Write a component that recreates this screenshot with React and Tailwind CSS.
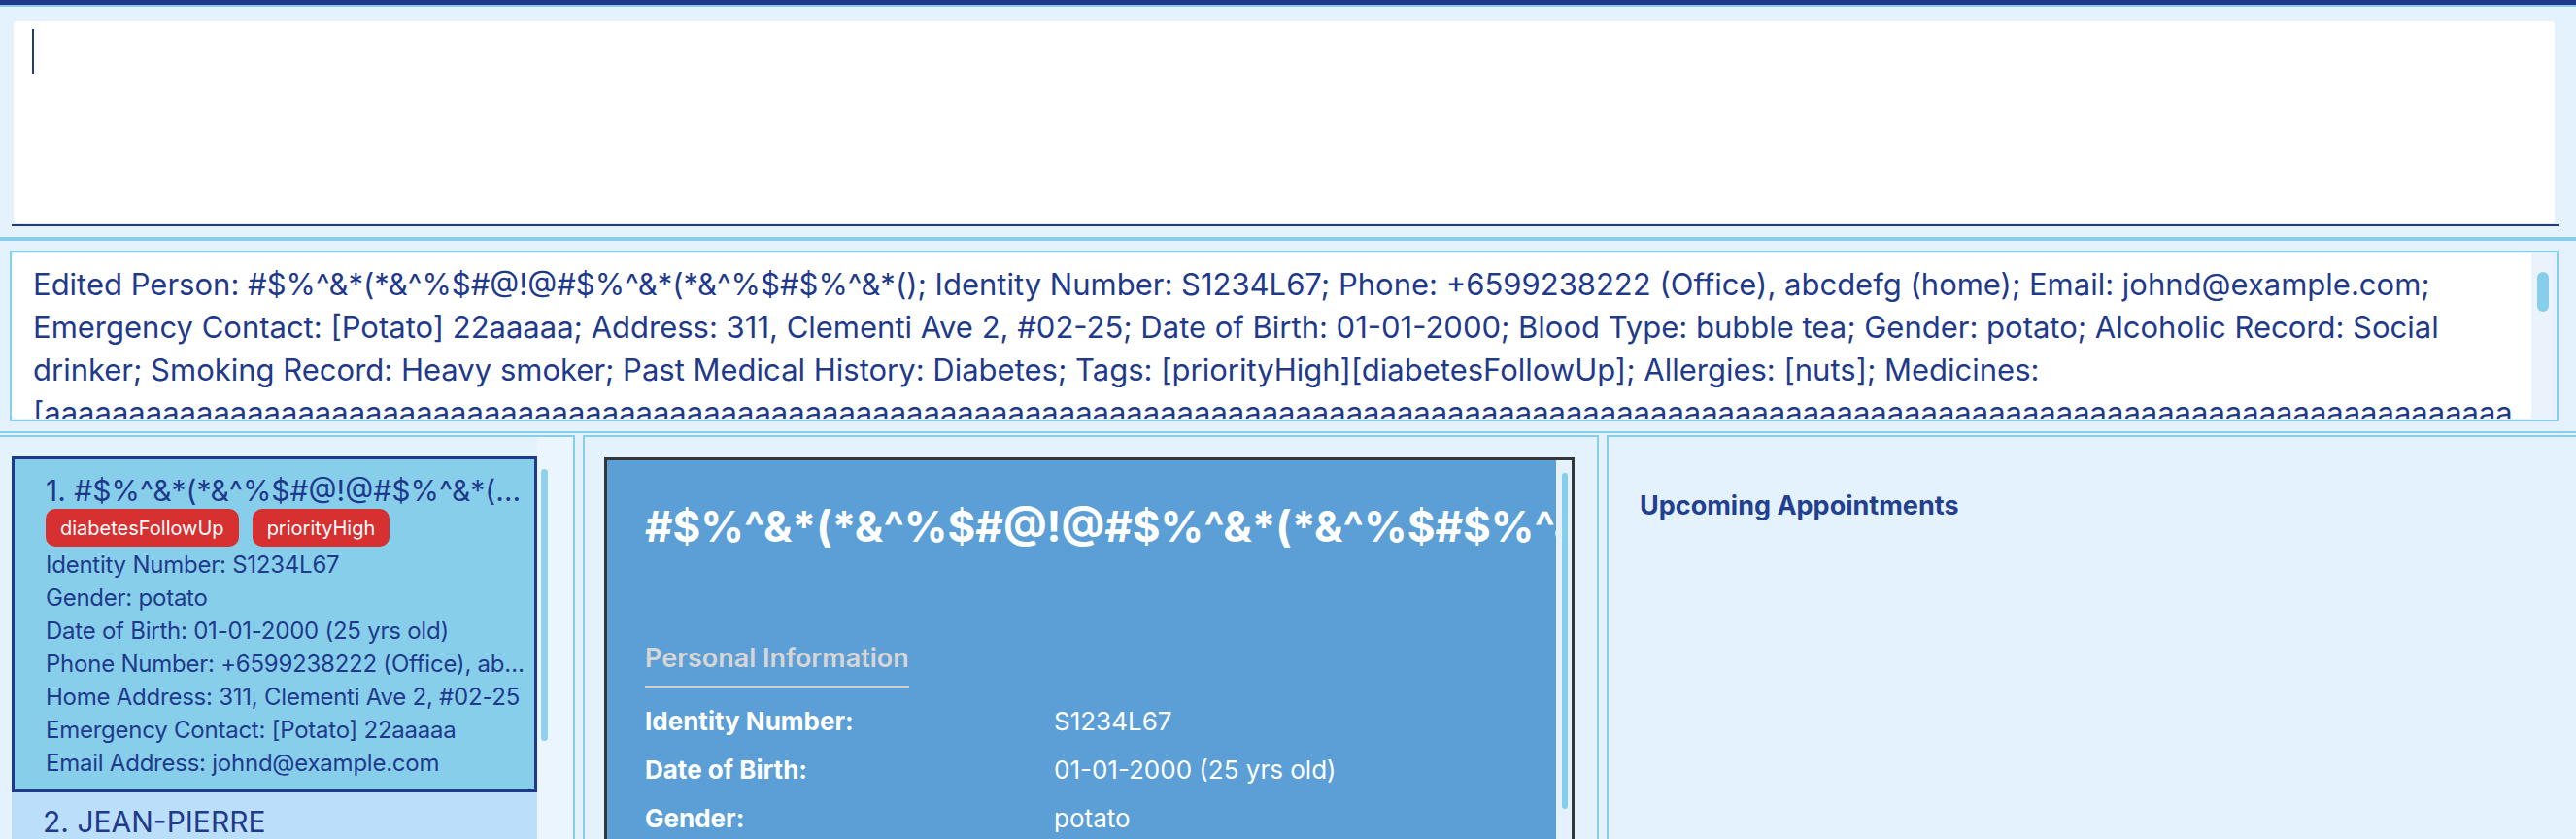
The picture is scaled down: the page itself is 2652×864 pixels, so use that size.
import React from 'react';

const NAME = '#$%^&*(*&^%$#@!@#$%^&*(*&^%$#$%^&*()';
const MEDS = '[' + 'a'.repeat(400) + ']';

const RESULT =
  `Edited Person: ${NAME}; Identity Number: S1234L67; Phone: +6599238222 (Office), abcdefg (home); Email: johnd@example.com; ` +
  'Emergency Contact: [Potato] 22aaaaa; Address: 311, Clementi Ave 2, #02-25; Date of Birth: 01-01-2000; Blood Type: bubble tea; ' +
  'Gender: potato; Alcoholic Record: Social drinker; Smoking Record: Heavy smoker; Past Medical History: Diabetes; ' +
  `Tags: [priorityHigh][diabetesFollowUp]; Allergies: [nuts]; Medicines: ${MEDS}`;

const cardLines = [
  'Identity Number: S1234L67',
  'Gender: potato',
  'Date of Birth: 01-01-2000 (25 yrs old)',
  'Phone Number: +6599238222 (Office), abcdefg (home)',
  'Home Address: 311, Clementi Ave 2, #02-25',
  'Emergency Contact: [Potato] 22aaaaa',
  'Email Address: johnd@example.com',
];

const details = [
  ['Identity Number:', 'S1234L67'],
  ['Date of Birth:', '01-01-2000 (25 yrs old)'],
  ['Gender:', 'potato'],
  ['Phone Number:', '+6599238222 (Office), abcdefg (home)'],
];

const Tag = ({ children }) => (
  <span className="h-[39px] px-[15px] rounded-[10px] bg-[#d63031] text-white text-[20px] flex items-center">
    {children}
  </span>
);

const PersonCard = () => (
  <div className="h-[346px] border-[3px] border-[#1f3a8b] bg-[#87ceeb] pl-[32px] pr-[6px] pt-[14px]">
    <div className="text-[30px] leading-[36px] truncate">1. {NAME}</div>
    <div className="flex gap-[14px] mt-[1px] mb-[2px]">
      <Tag>diabetesFollowUp</Tag>
      <Tag>priorityHigh</Tag>
    </div>
    {cardLines.map((line) => (
      <div key={line} className="text-[24px] leading-[34px] tracking-[-0.01em] truncate">
        {line}
      </div>
    ))}
  </div>
);

export default function App() {
  return (
    <div className="w-[2652px] h-[864px] overflow-hidden bg-[#e3f2fd] flex flex-col text-[#1f3a8b] font-['Inter',sans-serif]">
      <div className="h-[5px] shrink-0 bg-[#1f3a8b]" />
      <div className="h-[2px] shrink-0 bg-[#87ceeb]" />

      {/* command box */}
      <div className="h-[237px] shrink-0 pl-[12px] pr-[18px] pt-[15px]">
        <div className="border-b-2 border-[#1f3a8b] pb-[1px]">
          <div className="h-[208px] ml-[2px] mr-[4px] bg-white rounded-[4px] pl-[19px] pt-[8px]">
            <div className="w-[2px] h-[46px] bg-[#1f3a8b]" />
          </div>
        </div>
      </div>
      <div className="h-[4px] shrink-0 bg-[#87ceeb]" />

      {/* result display */}
      <div className="h-[196px] shrink-0 pl-[10px] pr-[18px] pt-[10px]">
        <div className="h-[176px] border-2 border-[#87ceeb] flex pr-[4px] py-[1px]">
          <div className="flex-1 bg-white rounded-l-[5px] overflow-hidden pl-[22px] pr-[10px] pt-[10px]">
            <p className="text-[31px] leading-[44px] break-words">{RESULT}</p>
          </div>
          <div className="w-[22px] bg-[#eaf3fc] rounded-r-[5px] pt-[19px] pl-[6px]">
            <div className="w-[12px] h-[41px] rounded-full bg-[#87ceeb]" />
          </div>
        </div>
      </div>
      <div className="h-[2px] shrink-0 bg-[#87ceeb]" />

      {/* panels */}
      <div className="flex-1 min-h-0 flex gap-[8px] pt-[2px]">
        <div className="w-[592px] shrink-0 border-t-2 border-r-2 border-[#87ceeb] flex overflow-hidden">
          <div className="w-[553px] shrink-0 pl-[12px] pt-[20px]">
            <PersonCard />
            <div className="h-[80px] bg-[#bbdefb] pl-[32px] pt-[12px]">
              <div className="text-[30px] leading-[36px]">2. JEAN-PIERRE</div>
            </div>
          </div>
          <div className="flex-1 bg-[#eaf5fd] pt-[33px] pl-[4px]">
            <div className="w-[7px] h-[280px] rounded-full bg-[#8fd1ec]" />
          </div>
        </div>

        <div className="w-[1046px] shrink-0 border-2 border-b-0 border-[#87ceeb] pl-[20px] pr-[23px] pt-[21px] overflow-hidden">
          <div className="h-[420px] border-[3px] border-b-0 border-[#353535] flex">
            <div className="flex-1 min-w-0 bg-[#5c9fd6] text-white pl-[39px] pt-[42px] overflow-hidden">
              <div className="text-[44px] leading-[52px] font-bold whitespace-nowrap overflow-hidden">
                {NAME}
              </div>
              <div className="mt-[93px] inline-block text-[27px] leading-[34px] font-semibold text-[#d6d6d6] border-b-2 border-[#cfcfcf] pb-[11px]">
                Personal Information
              </div>
              <div className="mt-[9px]">
                {details.map(([label, value]) => (
                  <div key={label} className="flex h-[50px] items-center text-[26px]">
                    <div className="w-[421px] shrink-0 font-bold">{label}</div>
                    <div>{value}</div>
                  </div>
                ))}
              </div>
            </div>
            <div className="w-[16px] shrink-0 bg-[#e3f2fd] pt-[13px] pl-[6px]">
              <div className="w-[6px] h-[346px] rounded-full bg-[#87ceeb]" />
            </div>
          </div>
        </div>

        <div className="flex-1 border-t-2 border-l-2 border-[#87ceeb] pl-[32px] pt-[54px]">
          <div className="text-[27px] leading-[34px] font-bold text-[#233f8f]">Upcoming Appointments</div>
        </div>
      </div>
    </div>
  );
}
